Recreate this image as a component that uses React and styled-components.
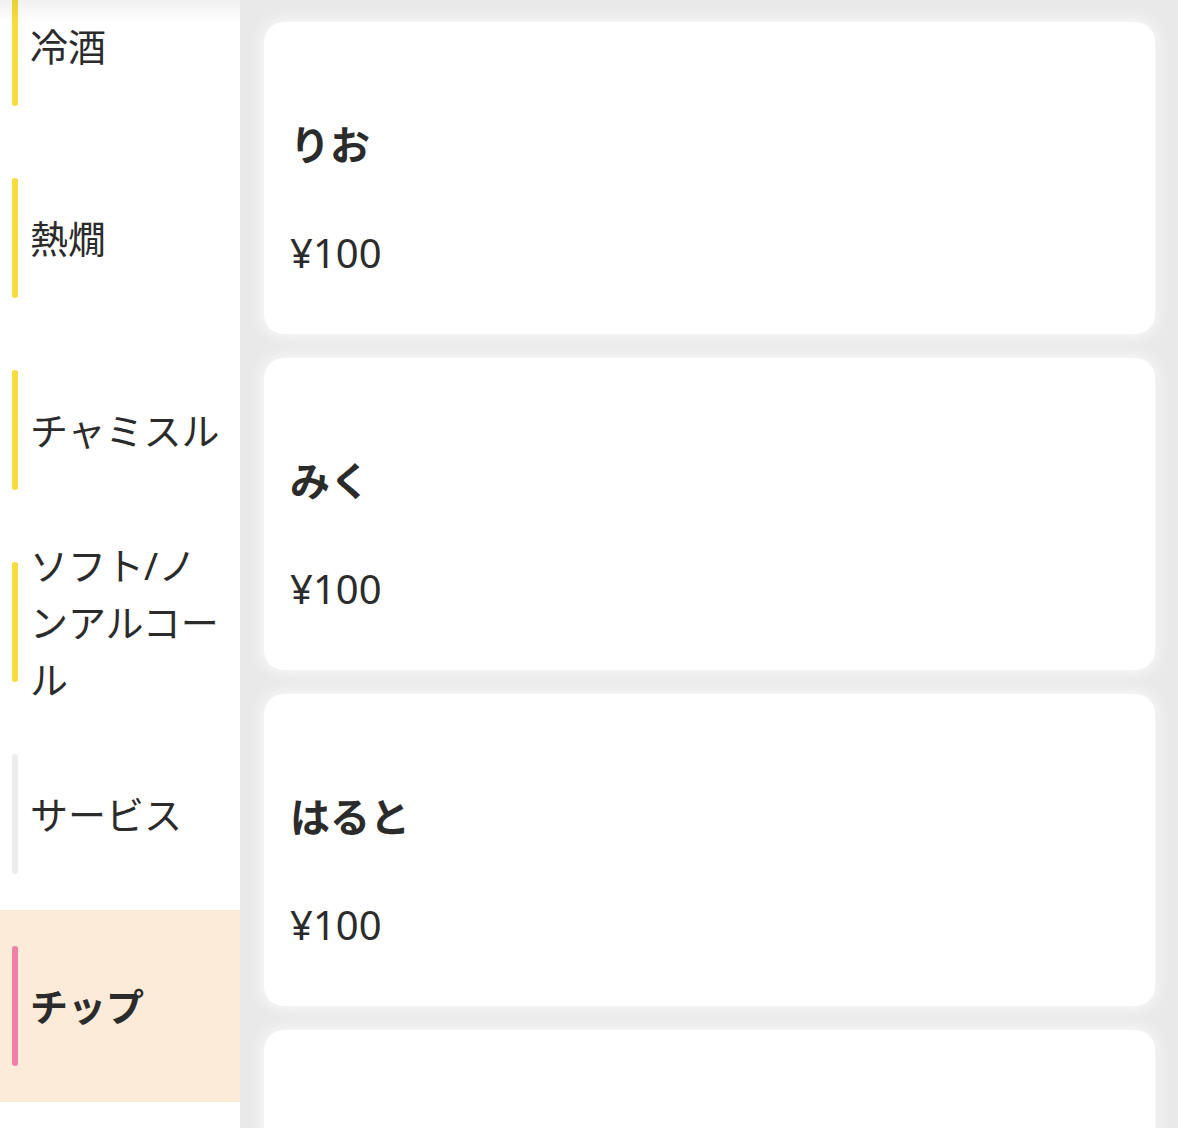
import React from "react";
import styled, { createGlobalStyle } from "styled-components";

const GlobalStyle = createGlobalStyle`
  html, body {
    margin: 0;
    padding: 0;
    height: 100%;
    overflow: hidden;
  }
  body {
    font-family: "Noto Sans", "Noto Sans CJK JP", sans-serif;
    color: #333;
  }
`;

const categories = [
  { label: "冷酒", tone: "yellow" },
  { label: "熱燗", tone: "yellow" },
  { label: "チャミスル", tone: "yellow" },
  { label: "ソフト/ノンアルコール", tone: "yellow" },
  { label: "サービス", tone: "gray" },
  { label: "チップ", tone: "pink", active: true },
];

const items = [
  { name: "りお", price: "¥100" },
  { name: "みく", price: "¥100" },
  { name: "はると", price: "¥100" },
  { name: "", price: "" },
];

const barColors = {
  yellow: "#f7dc3a",
  gray: "#ededf0",
  pink: "#f27fa8",
};

function App() {
  return (
    <>
      <GlobalStyle />
      <StyledPage>
        <Sidebar>
          <CategoryList>
            {categories.map((c) => (
              <CategoryItem key={c.label} $active={c.active}>
                <Bar $tone={c.tone} />
                <CategoryLabel $active={c.active}>{c.label}</CategoryLabel>
              </CategoryItem>
            ))}
          </CategoryList>
        </Sidebar>
        <Content>
          {items.map((item, i) => (
            <Card key={i}>
              {item.name && <ItemName>{item.name}</ItemName>}
              {item.price && <ItemPrice>{item.price}</ItemPrice>}
            </Card>
          ))}
        </Content>
      </StyledPage>
    </>
  );
}

const StyledPage = styled.div`
  display: flex;
  flex-direction: row;
  height: 100vh;
  overflow: hidden;
`;

const Sidebar = styled.nav`
  position: relative;
  width: 240px;
  flex-shrink: 0;
  background: #fff;
  overflow: hidden;
  &::after {
    content: "";
    position: absolute;
    top: 0;
    left: 0;
    right: 0;
    height: 22px;
    background: linear-gradient(rgba(0, 0, 0, 0.06), rgba(0, 0, 0, 0));
    pointer-events: none;
  }
`;

const CategoryList = styled.ul`
  list-style: none;
  margin: -50px 0 0;
  padding: 0;
`;

const CategoryItem = styled.li`
  display: flex;
  align-items: center;
  height: 192px;
  padding: 0 12px 0 12px;
  box-sizing: border-box;
  background: ${(p) => (p.$active ? "#fdebd9" : "transparent")};
`;

const Bar = styled.span`
  flex-shrink: 0;
  width: 6px;
  height: 120px;
  border-radius: 3px;
  background: ${(p) => barColors[p.$tone]};
  margin-right: 12px;
`;

const CategoryLabel = styled.span`
  font-size: 38px;
  line-height: 1.5;
  font-weight: ${(p) => (p.$active ? 700 : 400)};
  color: #2b2b2b;
  word-break: break-all;
`;

const Content = styled.main`
  flex: 1;
  display: flex;
  flex-direction: column;
  gap: 24px;
  padding: 22px 23px 0 24px;
  background: #e9e9e9;
  overflow: hidden;
`;

const Card = styled.div`
  flex-shrink: 0;
  height: 312px;
  box-sizing: border-box;
  display: flex;
  flex-direction: column;
  justify-content: center;
  gap: 48px;
  padding: 42px 26px 0;
  background: #fff;
  border-radius: 20px;
  box-shadow: 0 0 14px 3px rgba(255, 255, 255, 0.7);
`;

const ItemName = styled.h3`
  margin: 0;
  font-size: 40px;
  line-height: 1.5;
  font-weight: 700;
  color: #2b2b2b;
`;

const ItemPrice = styled.p`
  margin: 0;
  font-size: 40px;
  line-height: 1.5;
  font-weight: 400;
  color: #2b2b2b;
`;

export default App;
